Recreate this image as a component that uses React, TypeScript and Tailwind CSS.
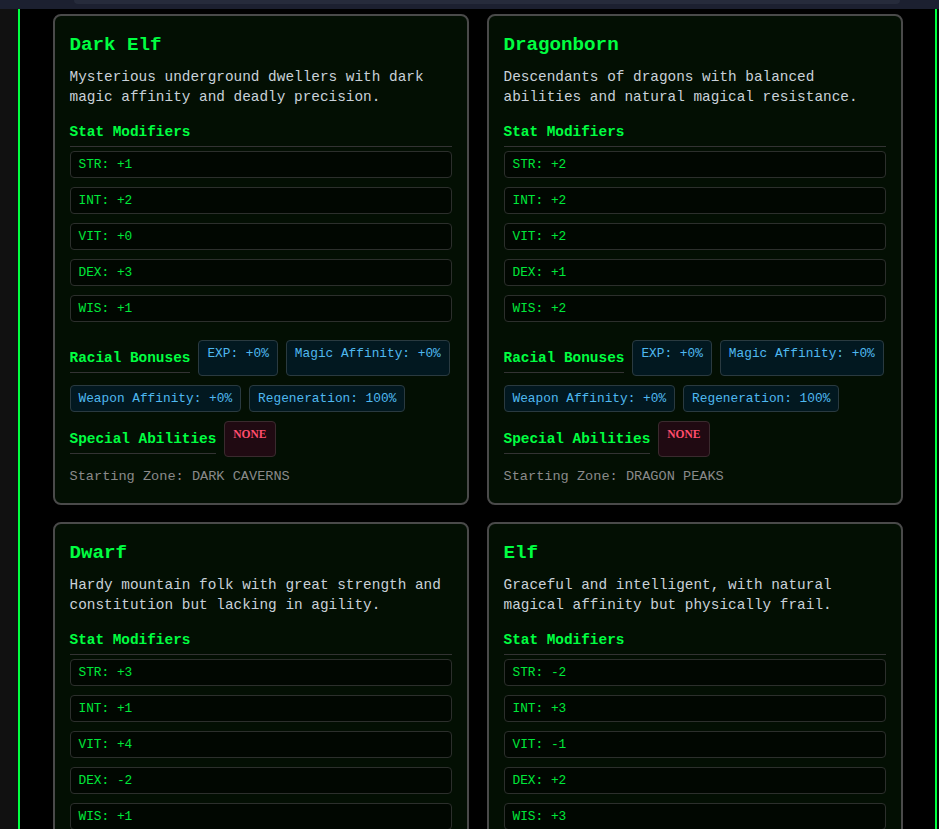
import React from 'react';

type Race = {
  name: string;
  description: string;
  stats: [string, string][];
  bonuses: string[];
  abilities: string[];
  zone: string;
};

const races: Race[] = [
  {
    name: 'Dark Elf',
    description: 'Mysterious underground dwellers with dark magic affinity and deadly precision.',
    stats: [['STR', '+1'], ['INT', '+2'], ['VIT', '+0'], ['DEX', '+3'], ['WIS', '+1']],
    bonuses: ['EXP: +0%', 'Magic Affinity: +0%', 'Weapon Affinity: +0%', 'Regeneration: 100%'],
    abilities: [],
    zone: 'DARK CAVERNS',
  },
  {
    name: 'Dragonborn',
    description: 'Descendants of dragons with balanced abilities and natural magical resistance.',
    stats: [['STR', '+2'], ['INT', '+2'], ['VIT', '+2'], ['DEX', '+1'], ['WIS', '+2']],
    bonuses: ['EXP: +0%', 'Magic Affinity: +0%', 'Weapon Affinity: +0%', 'Regeneration: 100%'],
    abilities: [],
    zone: 'DRAGON PEAKS',
  },
  {
    name: 'Dwarf',
    description: 'Hardy mountain folk with great strength and constitution but lacking in agility.',
    stats: [['STR', '+3'], ['INT', '+1'], ['VIT', '+4'], ['DEX', '-2'], ['WIS', '+1']],
    bonuses: ['EXP: +0%', 'Magic Affinity: +0%', 'Weapon Affinity: +0%', 'Regeneration: 100%'],
    abilities: [],
    zone: 'IRON MOUNTAINS',
  },
  {
    name: 'Elf',
    description: 'Graceful and intelligent, with natural magical affinity but physically frail.',
    stats: [['STR', '-2'], ['INT', '+3'], ['VIT', '-1'], ['DEX', '+2'], ['WIS', '+3']],
    bonuses: ['EXP: +0%', 'Magic Affinity: +0%', 'Weapon Affinity: +0%', 'Regeneration: 100%'],
    abilities: [],
    zone: 'ELVEN FOREST',
  },
];

function SectionTitle({ children, className = '' }: { children: React.ReactNode; className?: string }) {
  return (
    <h4
      className={`border-b border-[#333333] pb-[4px] text-[14.4px] leading-[20px] font-bold text-[#00ff41] ${className}`}
    >
      {children}
    </h4>
  );
}

function RaceCard({ race }: { race: Race }) {
  return (
    <div className="rounded-[8px] border-2 border-[#4a4a4a] bg-[#030f03] px-[15px] pt-[16px] pb-[16px]">
      <h3 className="mb-[9px] text-[19.2px] leading-[26px] font-bold text-[#00ff41]">{race.name}</h3>
      <p className="text-[14.4px] leading-[20px] text-[#c9d1d9]">{race.description}</p>

      <SectionTitle className="mt-[15px] mb-[4px]">Stat Modifiers</SectionTitle>
      <div className="flex flex-col gap-[9px]">
        {race.stats.map(([key, value]) => (
          <div
            key={key}
            className="rounded-[4px] border border-[#2c2f2c] bg-[#010701] px-[8px] py-[5px] text-[12.8px] leading-[15px] text-[#00e83a]"
          >
            {key}: {value}
          </div>
        ))}
      </div>

      <div className="mt-[18px] flex flex-wrap gap-x-[8px] gap-y-[9px]">
        <SectionTitle className="mt-[8px] mb-[3px]">Racial Bonuses</SectionTitle>
        {race.bonuses.map((bonus) => (
          <span
            key={bonus}
            className="rounded-[4px] border border-[#2a3a40] bg-[#021820] px-[8px] py-[5px] text-[12.8px] leading-[15px] text-[#4fb8f0]"
          >
            {bonus}
          </span>
        ))}
      </div>

      <div className="mt-[9px] flex flex-wrap gap-[8px]">
        <SectionTitle className="mt-[8px] mb-[3px]">Special Abilities</SectionTitle>
        {race.abilities.length === 0 ? (
          <span className="rounded-[4px] border border-[#3a2a2e] bg-[#200a12] px-[8px] py-[5px] text-[11.5px] leading-[15px] font-bold text-[#ff4d6d] [font-family:'Liberation_Serif',serif]">
            NONE
          </span>
        ) : (
          race.abilities.map((a) => (
            <span key={a} className="rounded-[4px] border border-[#3a2a2e] bg-[#200a12] px-[8px] py-[5px] text-[12.8px] leading-[15px] text-[#ff4d6d]">
              {a}
            </span>
          ))
        )}
      </div>

      <p className="mt-[10px] text-[13.6px] leading-[20px] text-[#8a8a8a]">Starting Zone: {race.zone}</p>
    </div>
  );
}

export default function App() {
  return (
    <div className="min-h-screen bg-black [font-family:'Courier_New','Liberation_Mono',monospace]">
      <div className="h-[9px] bg-[#1c2030] pl-[74px] pr-[39px]">
        <div className="h-[4px] rounded-b-[6px] bg-[#262b3b]" />
      </div>
      <div className="flex">
        <div className="w-[18px] shrink-0 bg-[#111111]" />
        <div className="w-[919px] shrink-0 border-x-2 border-[#00ff41] bg-black pt-[5px] pb-8">
          <div className="mx-auto grid w-[850px] grid-cols-2 gap-[17px_18px]">
            {races.map((race) => (
              <RaceCard key={race.name} race={race} />
            ))}
          </div>
        </div>
      </div>
    </div>
  );
}
